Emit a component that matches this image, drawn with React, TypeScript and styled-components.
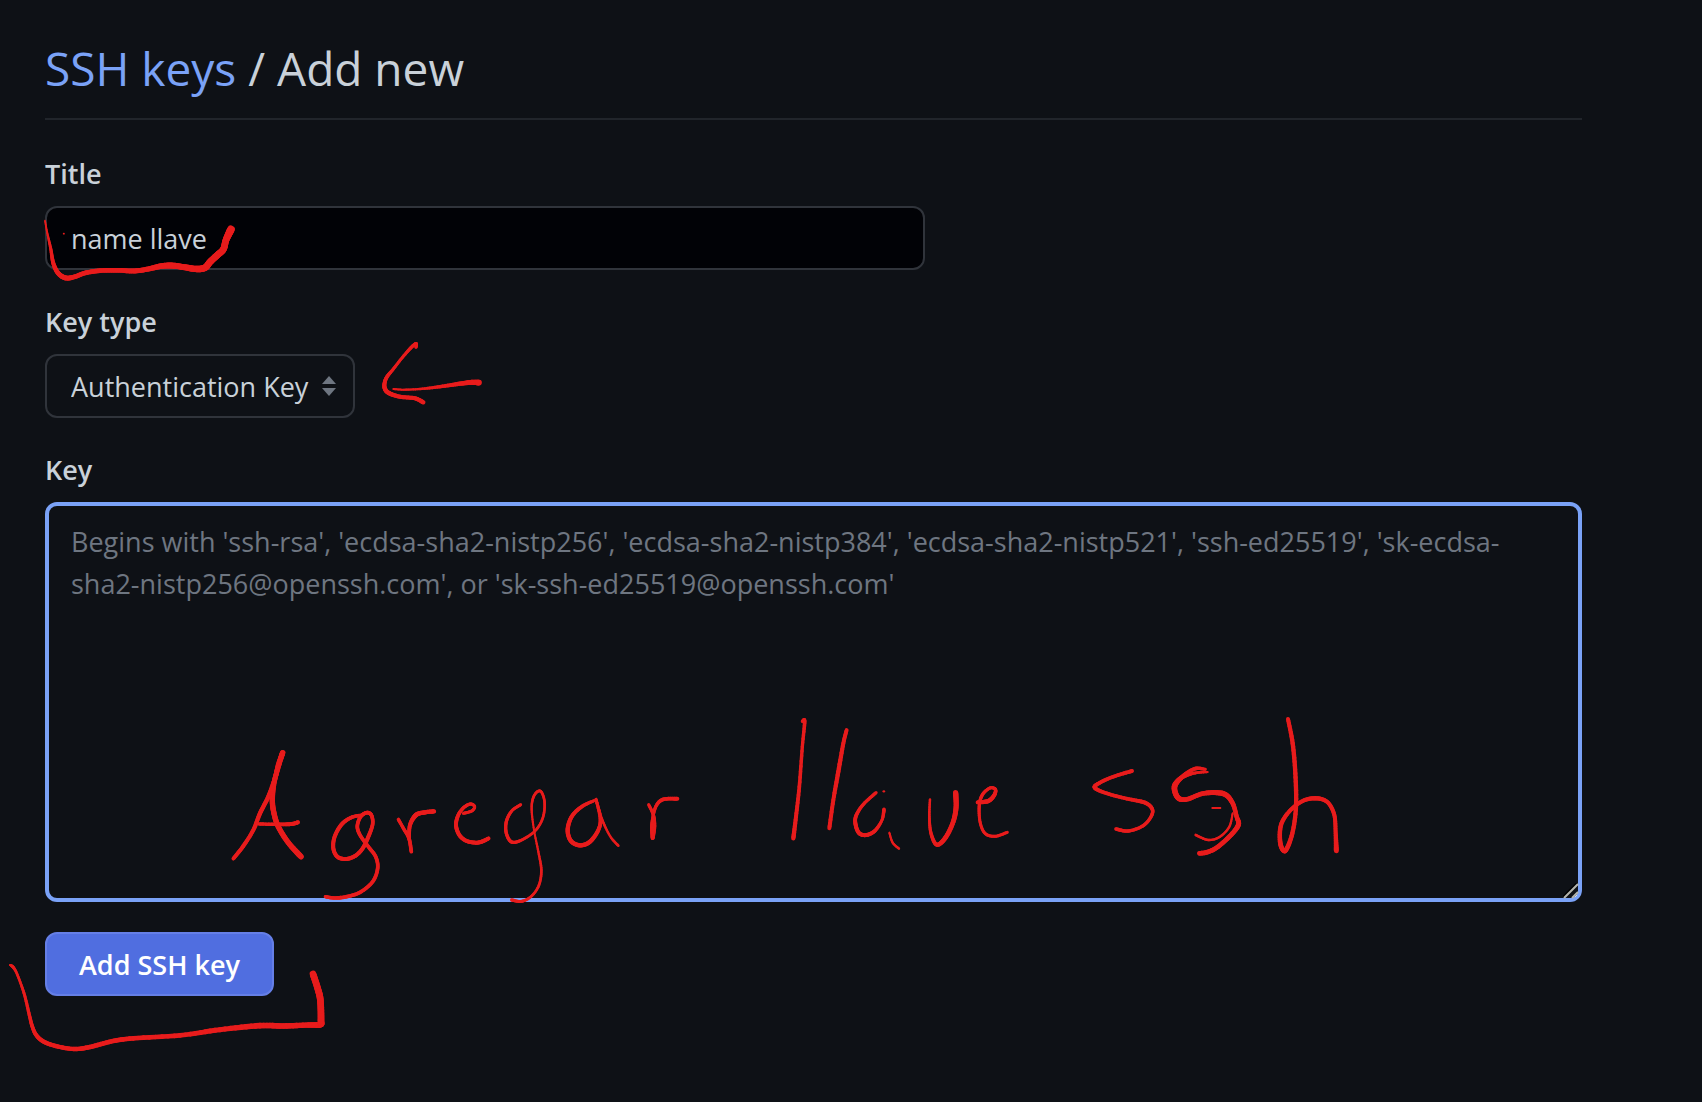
import React, { useState } from "react";
import styled, { createGlobalStyle } from "styled-components";

const color = {
  canvas: "#0e1116",
  inset: "#010206",
  text: "#c9d1d9",
  muted: "#6e7681",
  border: "#30343b",
  divider: "#21252b",
  accent: "#7aa2f7",
  primary: "#506ee0",
  primaryBorder: "#657fe6",
  ink: "#e81c1c",
};

const GlobalStyle = createGlobalStyle`
  *, *::before, *::after { box-sizing: border-box; }
  body {
    margin: 0;
    background: ${color.canvas};
    color: ${color.text};
    color-scheme: dark;
    font-family: "Segoe UI", "Open Sans", "Noto Sans", sans-serif;
    font-size: 27px;
    line-height: 42px;
  }
`;

const Page = styled.main`
  min-height: 100vh;
  padding: 32px 120px 64px 45px;
`;

const Heading = styled.h1`
  margin: 0 0 32px;
  padding-bottom: 14px;
  border-bottom: 2px solid ${color.divider};
  font-size: 46px;
  font-weight: 400;
  line-height: 72px;
`;

const Crumb = styled.a`
  color: ${color.accent};
  text-decoration: none;
  &:hover {
    text-decoration: underline;
  }
`;

const Form = styled.form`
  display: flex;
  flex-direction: column;
  gap: 30px;
`;

const Field = styled.div`
  display: flex;
  flex-direction: column;
  gap: 10px;
`;

const Label = styled.label`
  align-self: flex-start;
  font-weight: 600;
  line-height: 44px;
`;

const Control = styled.div<{ $maxWidth?: string; $fit?: boolean }>`
  position: relative;
  display: grid;
  width: ${(p) => (p.$fit ? "fit-content" : "auto")};
  max-width: ${(p) => p.$maxWidth ?? "none"};
`;

const TextInput = styled.input`
  width: 100%;
  height: 64px;
  padding: 0 24px;
  border: 2px solid ${color.border};
  border-radius: 12px;
  background: ${color.inset};
  color: inherit;
  font: inherit;
  outline: none;
`;

const Select = styled.select`
  grid-area: 1 / 1;
  width: 310px;
  height: 64px;
  padding: 2px 44px 0 24px;
  border: 2px solid ${color.border};
  border-radius: 12px;
  appearance: none;
  background: transparent;
  color: inherit;
  font: inherit;
  outline: none;
`;

const SelectArrows = styled.svg`
  grid-area: 1 / 1;
  place-self: center end;
  margin-right: 18px;
  fill: ${color.muted};
  pointer-events: none;
`;

const TextArea = styled.textarea`
  display: block;
  width: 100%;
  height: 400px;
  padding: 15px 22px;
  border: 4px solid ${color.accent};
  border-radius: 12px;
  background: transparent;
  color: inherit;
  font: inherit;
  outline: none;
  resize: vertical;
  &::placeholder {
    color: ${color.muted};
    opacity: 1;
  }
`;

const ResizeGrip = styled.svg`
  position: absolute;
  right: 3px;
  bottom: 3px;
  pointer-events: none;
`;

const SubmitButton = styled.button`
  height: 64px;
  padding: 2px 32px 0;
  border: 2px solid ${color.primaryBorder};
  border-radius: 12px;
  background: ${color.primary};
  color: #fff;
  font: inherit;
  font-weight: 600;
  cursor: pointer;
`;

const InkLayer = styled.svg<{ $left: number; $top: number }>`
  position: absolute;
  left: ${(p) => p.$left}px;
  top: ${(p) => p.$top}px;
  overflow: visible;
  stroke: ${color.ink};
  stroke-linecap: round;
  fill: none;
  pointer-events: none;
`;

/* A pen sample: x, y and the nib width at that point, in thirds of a pixel. */
type Sample = [number, number, number];

const spline = (a: number, b: number, c: number, d: number, t: number) =>
  0.5 *
  (2 * b +
    (c - a) * t +
    (2 * a - 5 * b + 4 * c - d) * t * t +
    (3 * b - a - 3 * c + d) * t * t * t);

/* Draws a smooth curve through the samples, its width following the pen pressure. */
function PenStroke({ points }: { points: Sample[] }) {
  if (points.length === 1) {
    const [x, y, w] = points[0];
    return <line x1={x} y1={y} x2={x + 1} y2={y} strokeWidth={w} />;
  }
  const steps = 8;
  const curve: Sample[] = [points[0]];
  for (let i = 0; i < points.length - 1; i++) {
    const a = points[Math.max(i - 1, 0)];
    const b = points[i];
    const c = points[i + 1];
    const d = points[Math.min(i + 2, points.length - 1)];
    for (let s = 1; s <= steps; s++) {
      const t = s / steps;
      curve.push([
        spline(a[0], b[0], c[0], d[0], t),
        spline(a[1], b[1], c[1], d[1], t),
        b[2] + (c[2] - b[2]) * t,
      ]);
    }
  }
  return (
    <>
      {curve.slice(1).map(([x, y, w], i) => (
        <line key={i} x1={curve[i][0]} y1={curve[i][1]} x2={x} y2={y} strokeWidth={w} />
      ))}
    </>
  );
}

function Strokes({ list, dx = 0, dy = 0 }: { list: Sample[][]; dx?: number; dy?: number }) {
  return (
    <g transform={`translate(${dx} ${dy})`}>
      {list.map((points, i) => (
        <PenStroke key={i} points={points} />
      ))}
    </g>
  );
}

const titleMark: Sample[][] = [
  [[45,62,5],[52,100,6],[62,145,9],[70,190,12],[85,220,14],[108,234,15],[135,230,14],[165,219,14],[210,212,14],[265,211,14],[310,213,15],[350,208,15],[395,198,17],[430,197,18],[465,202,18],[500,207,19],[525,203,20],[540,186,20],[560,167,20],[580,148,20],[588,120,20],[603,88,23]],
  [[101,101,5]],
];

const arrowMark: Sample[][] = [
  [[1248,172,9],[1248,161,10],[1232,174,10],[1205,205,9],[1180,237,9],[1160,262,11],[1153,285,12],[1158,302,13],[1175,313,13],[1205,321,12],[1245,325,12],[1270,337,13]],
  [[1180,297,6],[1210,299,6],[1260,297,7],[1320,290,10],[1380,281,13],[1415,277,15],[1437,278,17]],
];

const buttonMark: Sample[][] = [
  [[30,225,5],[38,230,9],[48,245,8],[62,280,8],[75,320,9],[88,375,10],[97,410,11],[110,437,12],[135,457,13],[180,471,13],[225,477,13],[270,471,14],[335,454,14],[400,445,14],[540,436,14],[660,419,15],[780,407,17],[850,408,17],[925,405,16],[960,404,17],[963,390,20],[961,330,20],[953,295,20],[939,252,20]],
];

const noteAgr: Sample[][] = [
  [[100,476,11],[130,438,12],[160,390,12],[180,340,13],[205,290,13],[225,235,14],[235,195,15],[248,158,16]],
  [[248,158,16],[235,200,15],[222,250,15],[217,300,16],[222,340,16],[235,380,16],[265,428,16],[303,470,17]],
  [[177,372,10],[240,373,11],[275,372,12],[294,367,12]],
  [[488,345,9],[455,352,11],[425,373,12],[404,410,12],[400,445,12],[412,470,12],[437,477,12],[465,468,12],[488,445,12],[506,408,12],[518,372,11],[514,345,11],[500,338,11],[482,350,11],[472,378,11],[480,405,11],[505,440,11],[527,470,11],[533,505,11],[518,545,11],[480,577,11],[440,590,11],[405,594,11],[376,590,10]],
  [[595,358,10],[612,388,10],[627,415,11],[634,455,11]],
  [[627,415,11],[630,375,12],[648,345,14],[675,337,13],[702,334,13]],
];

const noteEgar: Sample[][] = [
  [[70,160,9],[95,153,9],[104,140,9],[92,132,9],[72,142,10],[55,165,11],[48,195,12],[58,225,12],[80,243,12],[110,248,12],[130,243,12],[146,235,11]],
  [[242,134,9],[215,153,9],[199,185,10],[199,220,10],[215,246,10],[245,240,9],[285,213,8],[308,175,8],[314,130,8],[305,97,8],[292,95,8],[279,115,8],[275,150,7],[282,210,6],[295,275,7],[304,330,8],[297,375,8],[275,408,8],[245,424,9],[215,420,10]],
  [[462,122,9],[425,140,11],[395,170,12],[383,210,13],[393,243,13],[420,256,13],[450,245,13],[475,210,12],[481,175,11],[468,118,9]],
  [[468,118,9],[485,175,8],[510,228,7],[535,257,8]],
  [[626,134,9],[640,165,10],[642,200,14],[638,234,12]],
  [[638,234,12],[636,200,12],[640,165,9],[650,135,10],[670,118,11],[712,116,12]],
];

const noteLlave: Sample[][] = [
  [[127,64,9],[134,65,11],[127,140,10],[118,260,11],[108,350,12],[100,415,13]],
  [[260,90,11],[250,130,12],[235,215,13],[220,300,12],[208,385,12]],
  [[348,278,10],[310,313,10],[288,348,11],[287,375,12],[298,400,12],[320,405,12],[345,392,11],[366,360,9],[372,328,11]],
  [[371,274,7]],
  [[388,398,6],[398,428,7],[417,446,7]],
  [[510,298,7],[508,350,8],[513,400,10],[530,434,12],[555,415,14],[578,370,14],[588,325,15],[587,278,16]],
  [[653,307,12],[685,303,13],[703,285,12],[706,268,10],[690,264,9],[668,283,10],[658,315,10],[660,365,9],[675,400,9],[705,409,9],[742,397,9]],
];

const noteSsh: Sample[][] = [
  [[216,213,12],[160,230,11],[120,248,11],[104,263,12],[140,280,11],[200,296,11],[255,308,12],[277,328,11],[272,352,10],[248,378,10],[205,393,10],[168,387,11]],
  [[436,208,9],[405,206,11],[370,228,13],[344,258,17],[353,292,16],[380,298,14],[432,280,14],[490,281,16],[517,308,14],[530,350,13],[535,375,15],[510,408,14],[470,443,14],[440,457,14],[418,460,14]],
  [[443,216,6],[400,220,9],[360,236,12],[344,258,14]],
  [[518,340,6],[508,380,7],[480,410,7],[445,420,7],[407,405,8]],
  [[457,324,6],[481,324,6]],
  [[684,57,12],[698,130,13],[706,220,13],[708,320,13],[697,400,13],[676,452,14],[661,430,14],[663,375,13],[690,332,12],[730,302,12],[770,295,13],[803,307,12],[823,345,12],[827,400,12],[829,452,15]],
];

export default function App() {
  const [title, setTitle] = useState("name llave");
  const [key, setKey] = useState("");

  return (
    <>
      <GlobalStyle />
      <Page>
        <Heading>
          <Crumb href="#keys">SSH keys</Crumb> / Add new
        </Heading>
        <Form onSubmit={(e) => e.preventDefault()}>
          <Field>
            <Label htmlFor="title">Title</Label>
            <Control $maxWidth="880px">
              <TextInput id="title" value={title} onChange={(e) => setTitle(e.target.value)} />
              <InkLayer $left={-3} $top={10} width={197} height={67} viewBox="36 48 591 201" aria-hidden="true">
                <Strokes list={titleMark} />
              </InkLayer>
            </Control>
          </Field>
          <Field>
            <Label htmlFor="type">Key type</Label>
            <Control $fit>
              <Select id="type">
                <option>Authentication Key</option>
                <option>Signing Key</option>
              </Select>
              <SelectArrows width={16} height={20} viewBox="0 0 16 20" aria-hidden="true">
                <path d="M1 8 8 0l7 8zM1 12h14l-7 8z" />
              </SelectArrows>
              <InkLayer $left={333} $top={-15} width={107} height={68} viewBox="1134 147 321 204" aria-hidden="true">
                <Strokes list={arrowMark} />
              </InkLayer>
            </Control>
          </Field>
          <Field>
            <Label htmlFor="key">Key</Label>
            <Control>
              <TextArea
                id="key"
                value={key}
                onChange={(e) => setKey(e.target.value)}
                placeholder="Begins with 'ssh-rsa', 'ecdsa-sha2-nistp256', 'ecdsa-sha2-nistp384', 'ecdsa-sha2-nistp521', 'ssh-ed25519', 'sk-ecdsa-sha2-nistp256@openssh.com', or 'sk-ssh-ed25519@openssh.com'"
              />
              <ResizeGrip width={16} height={16} viewBox="0 0 16 16" fill="none" aria-hidden="true">
                <path d="M2 15 15 2v6l-7 7z" fill={color.canvas} />
                <path d="M0 14 14 0" stroke="#000" strokeWidth="2" />
                <path d="M1 15 15 1M9 15l6-6" stroke="#b4b4ac" strokeWidth="2" />
              </ResizeGrip>
              <InkLayer
                $left={155}
                $top={198}
                width={1170}
                height={210}
                viewBox="0 0 3510 630"
                role="img"
                aria-label="Agregar llave ssh"
              >
                <Strokes list={noteAgr} />
                <Strokes list={noteEgar} dx={720} dy={180} />
                <Strokes list={noteLlave} dx={1680} />
                <Strokes list={noteSsh} dx={2580} />
              </InkLayer>
            </Control>
          </Field>
          <Control $fit>
            <SubmitButton type="submit">Add SSH key</SubmitButton>
            <InkLayer $left={-38} $top={30} width={320} height={91} viewBox="21 216 960 273" aria-hidden="true">
              <Strokes list={buttonMark} />
            </InkLayer>
          </Control>
        </Form>
      </Page>
    </>
  );
}
